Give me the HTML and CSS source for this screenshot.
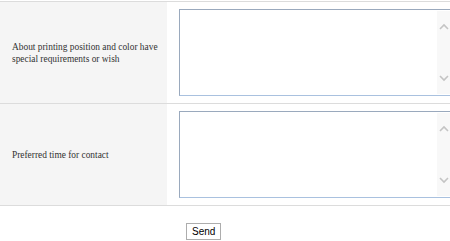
FILE: index.html
```html
<!DOCTYPE html>
<html lang="en">
<head>
<meta charset="UTF-8">
<title>Printing request</title>
<link rel="stylesheet" href="styles.css">
</head>
<body>

<form id="formularioPedido">
    <table class="tabla-pedido">
        <tr>
            <th>About printing position and color have special requirements or wish</th>
            <td>
                <div class="caja">
                    <textarea name="posicion" class="campo"></textarea>
                    <div class="barra">
                        <svg width="10" height="7" viewBox="0 0 10 7"><path d="M1 6 L5 2 L9 6" fill="none" stroke="#c4c4c4" stroke-width="1.6"/></svg>
                        <svg width="10" height="7" viewBox="0 0 10 7"><path d="M1 1 L5 5 L9 1" fill="none" stroke="#c4c4c4" stroke-width="1.6"/></svg>
                    </div>
                </div>
            </td>
        </tr>
        <tr>
            <th>Preferred time for contact</th>
            <td>
                <div class="caja">
                    <textarea name="horario" class="campo"></textarea>
                    <div class="barra">
                        <svg width="10" height="7" viewBox="0 0 10 7"><path d="M1 6 L5 2 L9 6" fill="none" stroke="#c4c4c4" stroke-width="1.6"/></svg>
                        <svg width="10" height="7" viewBox="0 0 10 7"><path d="M1 1 L5 5 L9 1" fill="none" stroke="#c4c4c4" stroke-width="1.6"/></svg>
                    </div>
                </div>
            </td>
        </tr>
    </table>

    <div class="acciones">
        <input type="button" value="Send" class="boton">
    </div>
</form>

</body>
</html>
```

FILE: styles.css
```css
html {
    overflow: hidden;
}
body {
    margin: 0;
    padding-top: 1px;
    font-family: "Liberation Serif", "Times New Roman", serif;
}
.tabla-pedido {
    width: 453px;
    border-collapse: collapse;
}
.tabla-pedido tr {
    border-top: 1px solid #dcdcdc;
    border-bottom: 1px solid #dcdcdc;
}
.tabla-pedido th {
    width: 150px;
    padding: 0 5px 0 12px;
    background-color: #f5f5f5;
    color: #333;
    font-family: "Liberation Serif", "Times New Roman", serif;
    font-size: 9.4px;
    font-weight: normal;
    line-height: 12px;
    text-align: left;
    vertical-align: middle;
}
.tabla-pedido td {
    padding: 7px 0 7px 12px;
}
.caja {
    position: relative;
    height: 87px;
}
.campo {
    display: block;
    box-sizing: border-box;
    width: 100%;
    height: 87px;
    margin: 0;
    border: 1px solid #9aa9bd;
    border-bottom-color: #a9c1df;
    resize: none;
    overflow: hidden;
    background: #fff;
}
.barra {
    position: absolute;
    top: 2px;
    right: 1px;
    bottom: 2px;
    width: 15px;
    background-color: #f8f8f8;
    display: flex;
    flex-direction: column;
    justify-content: space-between;
    align-items: flex-start;
    padding: 12px 0 12px 2px;
    box-sizing: border-box;
}
.barra svg {
    display: block;
}
.acciones {
    display: flex;
    padding: 17px 0 0 186px;
}
.boton {
    box-sizing: border-box;
    height: 17px;
    padding: 0 5px;
    margin: 0;
    font-family: "Liberation Sans", Arial, sans-serif;
    font-size: 10px;
    color: #000;
    background-color: #fff;
    border: 1px solid #adadad;
    border-radius: 0;
}
```
